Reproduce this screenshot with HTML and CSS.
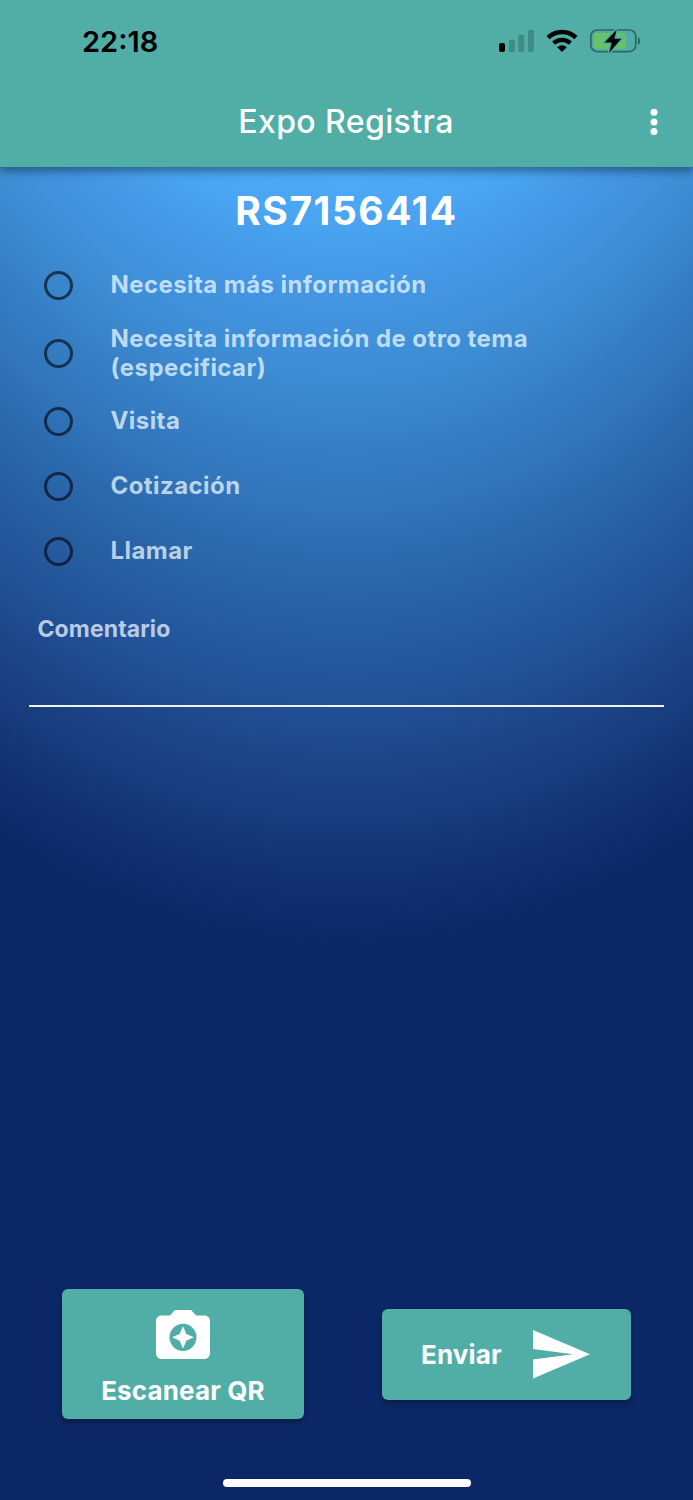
FILE: index.html
```
<!DOCTYPE html>
<html lang="es">
<head>
    <meta charset="UTF-8">
    <meta name="viewport" content="width=device-width, initial-scale=1.0">
    <title>Expo Registra</title>
    <link rel="stylesheet" href="styles.css">
</head>
<body>
    <div class="screen">
        <header class="top">
            <div class="status">
                <span class="time">22:18</span>
                <div class="status-icons">
                    <svg width="36" height="24" viewBox="0 0 36 24">
                        <rect x="0" y="14" width="6" height="9" rx="1.8"/>
                        <g fill="#3f8b85">
                            <rect x="9.8" y="10.5" width="6" height="12.5" rx="1.8"/>
                            <rect x="19.3" y="5.7" width="6" height="17.3" rx="1.8"/>
                            <rect x="29" y="0.7" width="6" height="22.3" rx="1.8"/>
                        </g>
                    </svg>
                    <svg class="wifi" width="32" height="24" viewBox="0 0 32 24">
                        <g fill="none" stroke="#000" stroke-width="4.4">
                            <path d="M2.1 8.6a20 20 0 0 1 27.8 0"/>
                            <path d="M7.6 14.2a12.2 12.2 0 0 1 16.8 0"/>
                        </g>
                        <path d="M11.2 18.2a7 7 0 0 1 9.6 0L16 23z"/>
                    </svg>
                    <svg class="battery" width="52" height="28" viewBox="0 0 52 28">
                        <rect x="0.8" y="3" width="45" height="21.6" rx="6.5" fill="none" stroke="#2f6863" stroke-width="1.7"/>
                        <path d="M48 10.3v7.4c3-1 3-6.4 0-7.4z" fill="#2f6863"/>
                        <rect x="3.7" y="6" width="32.3" height="15.7" rx="4" fill="#66c466"/>
                        <path d="M26.8 2.6L14.5 15.5h7.3l-2.8 10.5L31.3 11.8h-7z" stroke="#50aea7" stroke-width="3"/>
                        <path d="M26.8 2.6L14.5 15.5h7.3l-2.8 10.5L31.3 11.8h-7z"/>
                    </svg>
                </div>
            </div>
            <div class="appbar">
                <h1>Expo Registra</h1>
                <svg class="menu" width="8" height="28" viewBox="0 0 8 28" fill="#fff">
                    <circle cx="4" cy="4.2" r="3.5"/>
                    <circle cx="4" cy="14" r="3.5"/>
                    <circle cx="4" cy="23.6" r="3.5"/>
                </svg>
            </div>
        </header>
        <main class="content">
            <h2>RS7156414</h2>
            <ul class="options">
                <li><span class="radio"></span><span class="label">Necesita más información</span></li>
                <li class="tall"><span class="radio"></span><span class="label">Necesita información de otro tema (especificar)</span></li>
                <li><span class="radio"></span><span class="label">Visita</span></li>
                <li><span class="radio"></span><span class="label">Cotización</span></li>
                <li><span class="radio"></span><span class="label">Llamar</span></li>
            </ul>
            <div class="comment"><span>Comentario</span></div>
        </main>
        <footer class="actions">
            <button class="btn scan">
                <svg width="54" height="49" viewBox="2 2 20 18.1" preserveAspectRatio="none" fill="#fff">
                    <path fill-rule="evenodd" d="M20 4h-3.17L15 2H9L7.17 4H4c-1.1 0-2 .9-2 2v12c0 1.1.9 2.1 2 2.1h16c1.1 0 2-1 2-2.1V6c0-1.1-.9-2-2-2zm-8 13.1a5 5 0 0 1 0-10 5 5 0 0 1 0 10z"/>
                    <path d="M12 8l1.25 2.85L16 12.1l-2.75 1.25L12 16.2l-1.25-2.85L8 12.1l2.75-1.25z"/>
                </svg>
                <span>Escanear QR</span>
            </button>
            <button class="btn send">
                <span>Enviar</span>
                <svg width="57" height="49" viewBox="0 0 57 49" fill="#fff">
                    <path d="M0 0L57 24.2L0 48.5V29.5L40 24.2L0 19z"/>
                </svg>
            </button>
        </footer>
        <div class="home-bar"></div>
    </div>
</body>
</html>
```

FILE: styles.css
```
* {
    box-sizing: border-box;
}

body {
    font-family: Inter, "Liberation Sans", sans-serif;
    margin: 0;
    background-color: #0c2766;
}

.screen {
    height: 1500px;
    display: flex;
    flex-direction: column;
    background: radial-gradient(ellipse 900px 1413px at 50% -468px, #4dabf9 45%, #49a3f0 49.4%, #4395e2 54.4%, #3e8ed6 59.1%, #3780c6 64.4%, #3174ba 69.4%, #2d6cb0 72%, #275fa3 77%, #225196 82.7%, #1d4689 86.9%, #173a7b 91.9%, #102d6d 96.8%, #0c2766 100%);
}

/* Header */
.top {
    height: 167px;
    background-color: #50aea7;
    box-shadow: 0 4px 9px rgba(0, 0, 0, 0.4);
}

.status {
    height: 77px;
    padding: 5px 51px 0 82px;
    display: flex;
    justify-content: space-between;
    align-items: center;
}

.time {
    font-size: 29px;
    font-weight: 600;
}

.status-icons {
    display: flex;
    align-items: center;
}

.wifi {
    margin-left: 11px;
}

.battery {
    margin-left: 12px;
}

.appbar {
    height: 90px;
    padding: 0 35px 0 34px;
    display: flex;
    align-items: center;
}

h1 {
    flex: 1;
    margin: -1px 0 0 8px;
    color: white;
    font-size: 32px;
    font-weight: 500;
    letter-spacing: 0.4px;
    text-align: center;
}

/* Form */
.content {
    flex: 1;
    padding: 22px 29px 0;
}

h2 {
    margin: 0;
    color: white;
    font-size: 39px;
    font-weight: 700;
    line-height: 44px;
    letter-spacing: 1.5px;
    text-align: center;
}

.options {
    list-style-type: none;
    margin: 20px 0 0;
    padding: 0 0 0 15px;
}

.options li {
    height: 65px;
    display: flex;
    align-items: center;
}

.options li.tall {
    height: 71px;
}

.radio {
    width: 29px;
    height: 29px;
    border: 3px solid rgba(0, 0, 0, 0.6);
    border-radius: 50%;
}

.label {
    width: 460px;
    margin: -2px 0 0 37.5px;
    color: rgba(240, 252, 255, 0.72);
    font-size: 24px;
    font-weight: 700;
    line-height: 29px;
    letter-spacing: 0.43px;
}

.comment {
    height: 123px;
    padding: 31px 8.5px 0;
    border-bottom: 2px solid #eef3fa;
    color: #b9cbe4;
    font-size: 23px;
    font-weight: 700;
    line-height: 28px;
    letter-spacing: 0.1px;
}

/* Buttons */
.actions {
    height: 130px;
    margin: 0 62px 60px;
    display: flex;
    justify-content: space-between;
    align-items: center;
}

.btn {
    border: none;
    border-radius: 6px;
    background-color: #50aea7;
    box-shadow: 0 3px 5px rgba(0, 0, 0, 0.3);
    color: white;
    font-family: inherit;
    font-size: 26px;
    font-weight: 700;
    letter-spacing: 0.15px;
    display: flex;
    align-items: center;
}

.scan {
    width: 242px;
    height: 130px;
    padding: 21px 0 0;
    flex-direction: column;
    gap: 16px;
}

.send {
    width: 249px;
    height: 91px;
    padding: 0 41px 0 39px;
    justify-content: space-between;
}

.home-bar {
    width: 248px;
    height: 8px;
    margin: 0 auto 13px;
    border-radius: 4px;
    background-color: white;
}
```
